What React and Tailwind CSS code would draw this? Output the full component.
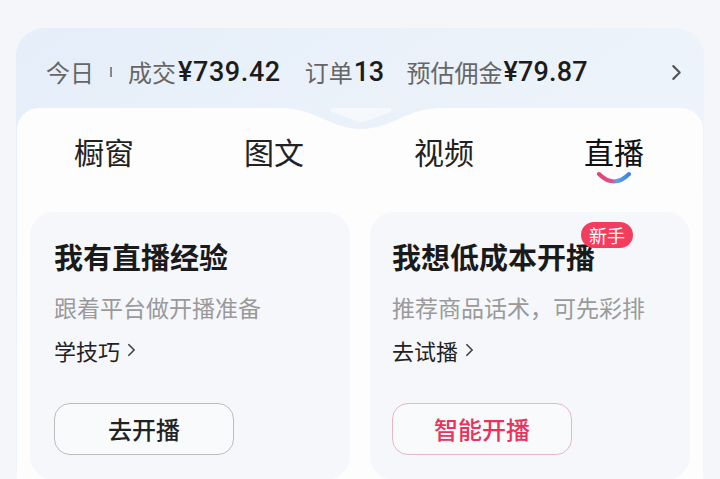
import React from 'react';

const cjk = { fontFamily: '"Noto Sans CJK SC", "Noto Sans", sans-serif' };
const num = { fontFamily: 'Roboto, "Noto Sans", sans-serif' };

const Chevron = ({ className = '' }) => (
  <svg viewBox="0 0 10 16" className={className} fill="none">
    <path d="M2 2l6 6-6 6" stroke="currentColor" strokeWidth="2" strokeLinecap="round" strokeLinejoin="round" />
  </svg>
);

const tabs = ['橱窗', '图文', '视频', '直播'];

const cards = [
  { title: '我有直播经验', desc: '跟着平台做开播准备', link: '学技巧', btn: '去开播', hot: false },
  { title: '我想低成本开播', desc: '推荐商品话术，可先彩排', link: '去试播', btn: '智能开播', hot: true },
];

const App = () => {
  return (
    <div className="w-[720px] h-[479px] overflow-hidden bg-[#f5f6fa] px-4 pt-[28px]" style={cjk}>
      <div className="rounded-[28px] bg-gradient-to-br from-[#e5eef9] via-[#edf3fa] to-[#f1f5fa] pb-1">
        {/* stats row */}
        <div className="flex items-center h-[80px] pt-2 pl-[30px] pr-[22px] text-[24px] leading-none">
          <span className="text-[#666]">今日</span>
          <span className="mx-[16px] w-[2px] h-[10px] bg-[#888]" />
          <span className="text-[#666]">成交</span>
          <span className="ml-[2px] font-medium text-[#1c1c1c] text-[27px] tracking-[0.6px]" style={num}>¥739.42</span>
          <span className="ml-[24px] text-[#666]">订单</span>
          <span className="ml-[1px] font-medium text-[#1c1c1c] text-[27px] tracking-[-0.5px]" style={num}>13</span>
          <span className="ml-[23px] text-[#666]">预估佣金</span>
          <span className="ml-[1px] font-medium text-[#1c1c1c] text-[27px] tracking-[0.2px]" style={num}>¥79.87</span>
          <Chevron className="ml-auto w-[11px] h-[17px] text-[#555]" />
        </div>

        {/* white panel */}
        <div className="relative mx-[1px] rounded-t-[22px] bg-[#fdfdfe] pb-[10px]">
          <svg className="absolute left-[264px] top-0 w-[160px] h-[24px]" viewBox="0 0 160 24">
            <path d="M0 0 C34 0 50 21 80 21 C110 21 126 0 160 0 Z" fill="#eaf1f9" />
            <path d="M52 0 L108 0 Q113 0 109 4 L88 12 Q80 16 72 12 L51 4 Q47 0 52 0 Z" fill="#f5f8fd" />
          </svg>

          <div className="grid grid-cols-4 w-[680px] ml-[2px] h-[104px] pt-[25px]">
            {tabs.map((t, i) => (
              <div key={t} className="flex flex-col items-center">
                <span className={`text-[30px] leading-[36px] ${i === 3 ? 'text-[#111]' : 'text-[#222]'}`}>{t}</span>
                {i === 3 && (
                  <svg className="w-[38px] h-[16px] mt-[1px]" viewBox="0 0 38 16" fill="none">
                    <defs>
                      <linearGradient id="smile" x1="0" y1="0" x2="1" y2="0">
                        <stop offset="0" stopColor="#e8406a" />
                        <stop offset="0.45" stopColor="#d45a90" />
                        <stop offset="0.6" stopColor="#5aa2ea" />
                        <stop offset="1" stopColor="#3f82dd" />
                      </linearGradient>
                    </defs>
                    <path d="M4 4 Q19 19 34 4" stroke="url(#smile)" strokeWidth="4" strokeLinecap="round" />
                  </svg>
                )}
              </div>
            ))}
          </div>

          <div className="grid grid-cols-2 gap-5 px-[13px]">
            {cards.map((c) => (
              <div
                key={c.title}
                className={`relative h-[268px] rounded-[24px] bg-[#f6f7fa] pt-[26px] ${c.hot ? 'pl-[22px]' : 'pl-[24px]'}`}
              >
                {c.hot && (
                  <span className="absolute left-[211px] top-[10px] h-[26px] px-[8px] rounded-full bg-[#f23d5e] text-white text-[18px] leading-[26px]">
                    新手
                  </span>
                )}
                <div className="text-[29px] leading-[36px] font-bold text-[#1a1a1a]">{c.title}</div>
                <div className="mt-[18px] text-[23px] leading-[30px] text-[#9a9a9a]">{c.desc}</div>
                <div className="mt-[13px] flex items-center gap-[7px] text-[22px] leading-[30px] text-[#222]">
                  {c.link}
                  <Chevron className="w-[9px] h-[14px] text-[#444]" />
                </div>
                <button
                  className={`mt-[38px] w-[180px] h-[52px] rounded-[16px] border bg-white/40 text-[24px] font-medium ${
                    c.hot ? 'border-[#e6b8c4] text-[#e8335d]' : 'border-[#bdbdbd] text-[#222]'
                  }`}
                >
                  {c.btn}
                </button>
              </div>
            ))}
          </div>
        </div>
      </div>
    </div>
  );
};

export default App;
